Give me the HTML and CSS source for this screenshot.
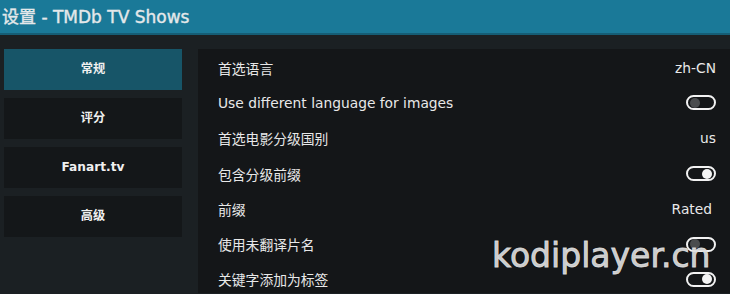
FILE: index.html
```html
<!DOCTYPE html>
<html lang="zh-CN">
<head>
    <meta charset="UTF-8">
    <title>设置 - TMDb TV Shows</title>
    <link rel="stylesheet" href="styles.css">
</head>
<body>
    <div class="header">设置 - TMDb TV Shows</div>

    <div class="main">
        <div class="sidebar">
            <div class="tab active">常规</div>
            <div class="tab">评分</div>
            <div class="tab">Fanart.tv</div>
            <div class="tab">高级</div>
        </div>

        <div class="panel">
            <div class="row"><span>首选语言</span><span class="value">zh-CN</span></div>
            <div class="row"><span>Use different language for images</span><span class="toggle"></span></div>
            <div class="row"><span>首选电影分级国别</span><span class="value">us</span></div>
            <div class="row"><span>包含分级前缀</span><span class="toggle on"></span></div>
            <div class="row"><span>前缀</span><span class="value shift">Rated</span></div>
            <div class="row"><span>使用未翻译片名</span><span class="toggle"></span></div>
            <div class="row"><span>关键字添加为标签</span><span class="toggle on"></span></div>
        </div>
    </div>

    <!-- watermark over the list -->
    <div class="watermark">kodiplayer.cn</div>
</body>
</html>
```

FILE: styles.css
```css
body {
    margin: 0;
    height: 294px;
    overflow: hidden;
    background-color: #1b2023;
    color: #e8e8e8;
    font-family: "DejaVu Sans", "Noto Sans CJK SC", sans-serif;
    position: relative;
}
.header {
    height: 33px;
    line-height: 34px;
    padding-left: 2px;
    background-color: #1a7998;
    border-bottom: 2px solid #155d75;
    font-size: 17px;
    -webkit-text-stroke: 0.4px #e4e8ea;
    color: #e4e8ea;
}
.main {
    display: flex;
    padding-top: 14px;
}
.sidebar {
    width: 178px;
    margin-left: 4px;
    display: flex;
    flex-direction: column;
    gap: 8px;
}
.tab {
    height: 41px;
    line-height: 41px;
    text-align: center;
    background-color: #141719;
    font-size: 12.2px;
    font-weight: bold;
    color: #f0f0f0;
}
.tab.active {
    background-color: #175568;
}
.panel {
    flex: 1;
    margin-left: 16px;
    height: 243px;
    overflow: hidden;
    padding: 1px 14px 0 20px;
    background-color: #141618;
}
.row {
    height: 35.3px;
    display: flex;
    align-items: center;
    justify-content: space-between;
    font-size: 13.8px;
}
.value {
    color: #e8e8e8;
}
.value.shift {
    margin-right: 4px;
}
.toggle {
    width: 26px;
    height: 11px;
    border: 2px solid #f2f2f2;
    border-radius: 9px;
    position: relative;
}
.toggle::after {
    content: "";
    position: absolute;
    top: 0.5px;
    left: 2px;
    width: 10px;
    height: 10px;
    border-radius: 50%;
    background-color: #4a4c4e;
}
.toggle.on::after {
    left: auto;
    right: 2px;
    background-color: #f4f4f4;
}
.watermark {
    position: absolute;
    left: 492px;
    top: 236px;
    font-family: "DejaVu Sans", sans-serif;
    font-size: 33px;
    color: rgba(222, 222, 222, 0.92);
    -webkit-text-stroke: 0.9px rgba(222, 222, 222, 0.92);
}
```
